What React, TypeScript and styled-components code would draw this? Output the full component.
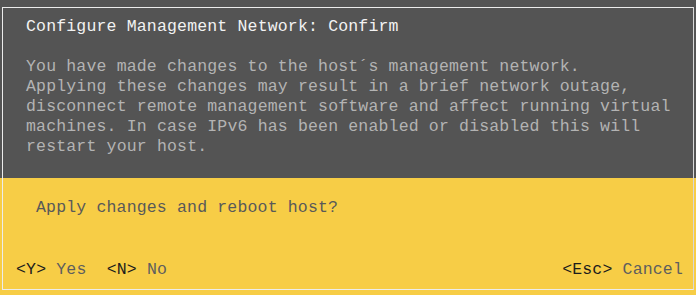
import React from "react";
import styled, { createGlobalStyle } from "styled-components";

const GRAY = "#545454";
const YELLOW = "#f7cd46";

const Global = createGlobalStyle`
  html, body { margin: 0; padding: 0; }
  body {
    width: 696px;
    height: 295px;
    overflow: hidden;
    font-family: "Liberation Mono", "DejaVu Sans Mono", monospace;
  }
`;

const Screen = styled.div`
  width: 696px;
  height: 295px;
  box-sizing: border-box;
  padding: 7px 2px 5px 2px;
  background: linear-gradient(to bottom, ${GRAY} 0, ${GRAY} 178px, ${YELLOW} 178px);
`;

const Frame = styled.div`
  height: 100%;
  box-sizing: border-box;
  border: 1px solid #ececec;
  border-right-color: #d8d8d8;
  display: flex;
  flex-direction: column;
`;

const Header = styled.section`
  height: 170px;
  box-sizing: border-box;
  background: ${GRAY};
  padding: 9px 0 0 23px;
  display: flex;
  flex-direction: column;
  gap: 20px;
`;

const Text = styled.div<{ $color: string }>`
  font-family: "Liberation Mono", "DejaVu Sans Mono", monospace;
  font-size: 16.5px;
  letter-spacing: 0.17px;
  line-height: 20px;
  white-space: pre;
  color: ${(p) => p.$color};
`;

const Prompt = styled.section`
  flex: 1;
  background: ${YELLOW};
  padding: 20px 10px 9px 13px;
  display: flex;
  flex-direction: column;
  justify-content: space-between;
`;

const Question = styled(Text)`
  padding-left: 20px;
`;

const Actions = styled.div`
  display: flex;
  justify-content: space-between;
`;

const Group = styled.div`
  display: flex;
`;

const Key = styled(Text)``;

const body = [
  "You have made changes to the host\u00b4s management network.",
  "Applying these changes may result in a brief network outage,",
  "disconnect remote management software and affect running virtual",
  "machines. In case IPv6 has been enabled or disabled this will",
  "restart your host.",
].join("\n");

export default function App() {
  return (
    <>
      <Global />
      <Screen>
        <Frame>
          <Header>
            <Text $color="#f2f2f2">Configure Management Network: Confirm</Text>
            <Text $color="#b3b3b3">{body}</Text>
          </Header>
          <Prompt>
            <Question $color="#595959">Apply changes and reboot host?</Question>
            <Actions>
              <Group>
                <Key $color="#1c1c1c">{"<Y>"}</Key>
                <Key $color="#5e5e5e">{" Yes  "}</Key>
                <Key $color="#1c1c1c">{"<N>"}</Key>
                <Key $color="#5e5e5e">{" No"}</Key>
              </Group>
              <Group>
                <Key $color="#1c1c1c">{"<Esc>"}</Key>
                <Key $color="#5e5e5e">{" Cancel"}</Key>
              </Group>
            </Actions>
          </Prompt>
        </Frame>
      </Screen>
    </>
  );
}
